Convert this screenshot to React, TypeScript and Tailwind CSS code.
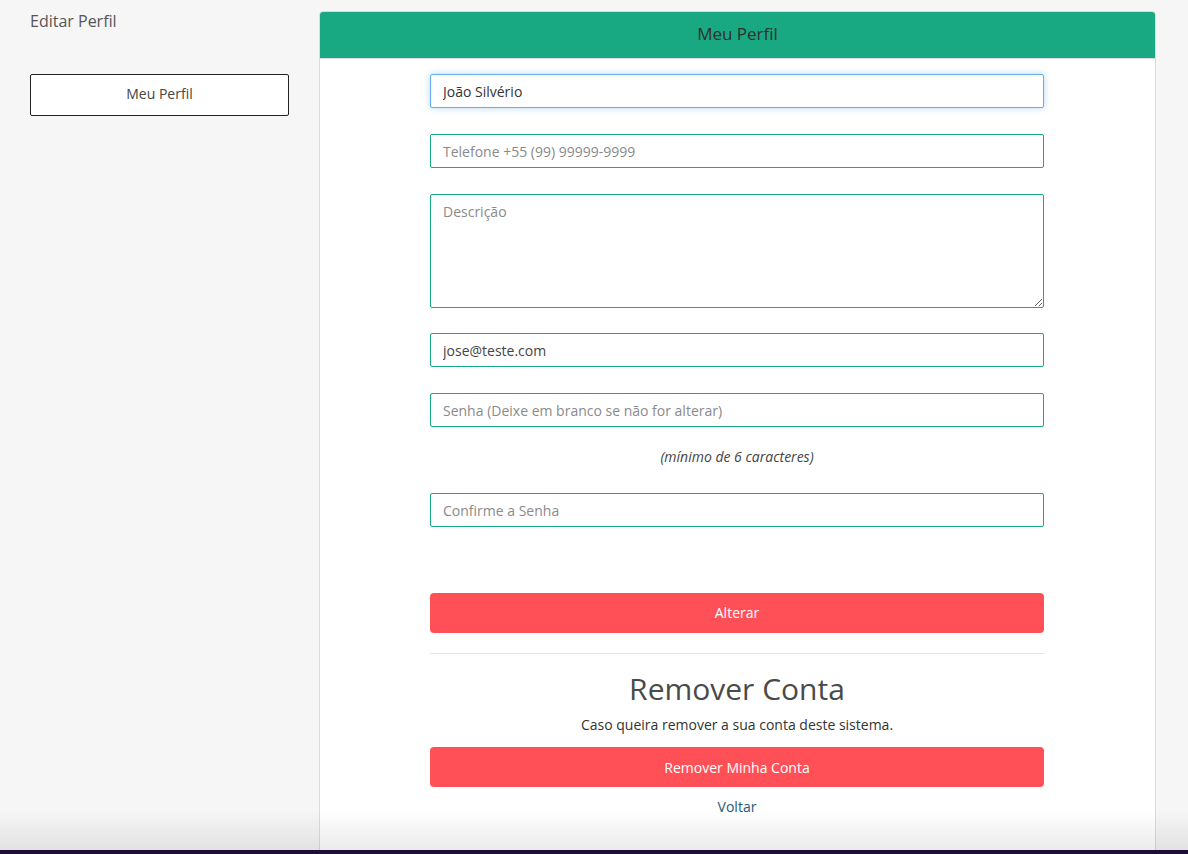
export default function App() {
    const inputCls =
        'w-full h-[34px] px-3 bg-white border border-[#19aa84] rounded-[2px] text-[14px] text-[#444] placeholder:text-[#8a8a8a] outline-none';

    return (
        <div
            className="min-h-[854px] bg-[#f6f6f6] flex items-start gap-[30px] pl-[30px] pr-[32px] pt-[11px] relative overflow-hidden"
            style={{ fontFamily: '"Open Sans", "Noto Sans", sans-serif' }}
        >
            <aside className="w-[259px] shrink-0">
                <h4 className="text-[16px] text-[#555] leading-[20px]">Editar Perfil</h4>
                <button className="mt-[43px] w-full h-[42px] pb-[3px] bg-white border border-[#222] rounded-[2px] text-[14px] text-[#444]">
                    Meu Perfil
                </button>
            </aside>

            <main className="flex-1 bg-white border border-[#dcdcdc] rounded-t-[4px] min-h-[860px]">
                <div className="h-[47px] pb-[2px] bg-[#18a982] border-b border-[#dcdcdc] rounded-t-[3px] flex items-center justify-center text-[17px] text-[#2f2f2f]">
                    Meu Perfil
                </div>

                <form className="w-[614px] ml-[110px] pt-[15px] flex flex-col">
                    <input
                        className="w-full h-[34px] px-3 bg-white border border-[#66afe9] rounded-[2px] text-[14px] text-[#333] outline-none shadow-[0_0_6px_rgba(102,175,233,0.5)]"
                        defaultValue="João Silvério"
                    />
                    <input className={inputCls + ' mt-[26px]'} placeholder="Telefone +55 (99) 99999-9999" />
                    <textarea
                        className="w-full h-[114px] mt-[26px] px-3 py-[6px] bg-white border border-[#19aa84] rounded-[2px] text-[14px] text-[#444] placeholder:text-[#8a8a8a] outline-none"
                        placeholder="Descrição"
                    />
                    <input className={inputCls + ' mt-[25px]'} defaultValue="jose@teste.com" />
                    <input className={inputCls + ' mt-[26px]'} placeholder="Senha (Deixe em branco se não for alterar)" />
                    <p className="mt-[20px] text-center italic text-[14px] text-[#444] leading-[20px]">(mínimo de 6 caracteres)</p>
                    <input className={inputCls + ' mt-[26px]'} placeholder="Confirme a Senha" />

                    <button
                        type="button"
                        className="mt-[66px] h-[40px] pb-[2px] w-full bg-[#ff5058] rounded-[4px] text-white text-[14px]"
                    >
                        Alterar
                    </button>

                    <hr className="mt-[20px] border-t border-[#e6e6e6]" />

                    <h2 className="mt-[17px] text-center text-[30px] leading-[36px] text-[#4a4a4a]">Remover Conta</h2>
                    <p className="mt-[8px] text-center text-[14px] leading-[20px] text-[#333]">
                        Caso queira remover a sua conta deste sistema.
                    </p>
                    <button
                        type="button"
                        className="mt-[12px] h-[40px] w-full bg-[#ff5058] rounded-[4px] text-white text-[14px]"
                    >
                        Remover Minha Conta
                    </button>
                    <a className="mt-[10px] text-center text-[14px] leading-[20px] text-[#23597a]">Voltar</a>
                </form>
            </main>

            <div className="pointer-events-none fixed left-0 right-0 bottom-[4px] h-[40px] bg-gradient-to-b from-transparent to-[rgba(0,0,0,0.08)]" />
            <div className="fixed left-0 right-0 bottom-0 h-[4px] bg-[#1d0c3a]" />
        </div>
    );
}
